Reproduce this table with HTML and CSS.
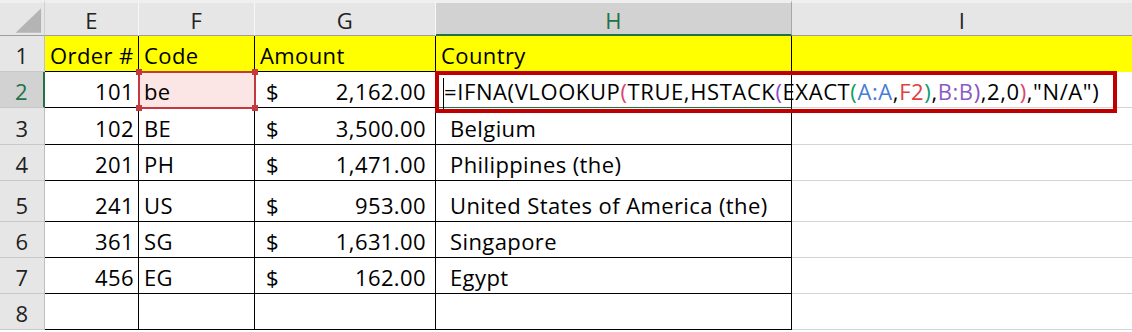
FILE: index.html
```html
<!DOCTYPE html>
<html>
<head>
<meta charset="utf-8">
<link rel="stylesheet" href="styles.css">
</head>
<body>
<div class="sheet">
  <div class="corner"><svg width="45" height="33" viewBox="0 0 45 33"><polygon points="16,30 42,30 42,5" fill="#b4b4b4"/></svg></div>
  <div class="ch">E</div>
  <div class="ch">F</div>
  <div class="ch">G</div>
  <div class="ch ch-sel">H</div>
  <div class="ch ch-last">I</div>

  <div class="rh">1</div>
  <div class="c y">Order #</div>
  <div class="c y">Code</div>
  <div class="c y">Amount</div>
  <div class="c y">Country</div>
  <div class="c y ci">&nbsp;</div>

  <div class="rh rh-sel">2</div>
  <div class="c num">101</div>
  <div class="c ref-cell">be</div>
  <div class="c amt"><span>$</span><span>2,162.00</span></div>
  <div class="c active"></div>
  <div class="c ci"></div>

  <div class="rh">3</div>
  <div class="c num">102</div>
  <div class="c">BE</div>
  <div class="c amt"><span>$</span><span>3,500.00</span></div>
  <div class="c ind">Belgium</div>
  <div class="c ci"></div>

  <div class="rh">4</div>
  <div class="c num">201</div>
  <div class="c">PH</div>
  <div class="c amt"><span>$</span><span>1,471.00</span></div>
  <div class="c ind">Philippines (the)</div>
  <div class="c ci"></div>

  <div class="rh">5</div>
  <div class="c num">241</div>
  <div class="c">US</div>
  <div class="c amt"><span>$</span><span>953.00</span></div>
  <div class="c ind">United States of America (the)</div>
  <div class="c ci"></div>

  <div class="rh">6</div>
  <div class="c num">361</div>
  <div class="c">SG</div>
  <div class="c amt"><span>$</span><span>1,631.00</span></div>
  <div class="c ind">Singapore</div>
  <div class="c ci"></div>

  <div class="rh">7</div>
  <div class="c num">456</div>
  <div class="c">EG</div>
  <div class="c amt"><span>$</span><span>162.00</span></div>
  <div class="c ind">Egypt</div>
  <div class="c ci"></div>

  <div class="rh">8</div>
  <div class="c"></div>
  <div class="c"></div>
  <div class="c"></div>
  <div class="c"></div>
  <div class="c ci"></div>

  <div class="ref-box">
    <i class="h tl"></i><i class="h tr"></i><i class="h bl"></i><i class="h br"></i>
  </div>
  <div class="editor"><span class="caret"></span><span class="f">=IFNA(VLOOKUP<b class="p1">(</b>TRUE,HSTACK<b class="p2">(</b>EXACT<b class="p3">(</b><b class="rb">A:A</b>,<b class="rr">F2</b><b class="p3">)</b>,<b class="rp">B:B</b><b class="p2">)</b>,2,0<b class="p1">)</b>,"N/A")</span></div>
</div>
</body>
</html>
```
FILE: styles.css
```css
* { box-sizing: border-box; }
html, body { margin: 0; padding: 0; background: #fff; }
body {
  font-family: "Open Sans", Lato, "Liberation Sans", sans-serif;
  font-size: 22px;
  letter-spacing: 0.4px;
  color: #000;
  overflow: hidden;
}
.sheet {
  position: relative;
  display: grid;
  grid-template-columns: 45px 94px 116px 181px 356px 340px;
  grid-template-rows: 36px 36px 36px 37px 36px 41px 36px 36px 36px;
}
.corner {
  background: #e6e6e6;
  border-top: 3px solid #efefef;
  border-right: 1px solid #d0d0d0;
  border-bottom: 1px solid #9e9e9e;
  display: flex;
}
.ch {
  background: #e6e6e6;
  border-top: 3px solid #efefef;
  border-right: 1px solid #f7f7f7;
  border-bottom: 1px solid #9e9e9e;
  display: flex;
  align-items: center;
  justify-content: center;
  color: #222;
  line-height: 1;
  padding-top: 2px;
}
.ch-sel {
  background: #d2d2d2;
  color: #217346;
  border-bottom: 2px solid #217346;
  border-right: 1px solid #a6a6a6;
}
.ch-last { border-right: none; }
.rh {
  background: #e6e6e6;
  border-right: 1px solid #bfbfbf;
  border-bottom: 1px solid #c8c8c8;
  display: flex;
  align-items: flex-end;
  justify-content: center;
  line-height: 30px;
  padding-bottom: 1px;
  color: #222;
}
.rh-sel {
  background: #d2d2d2;
  color: #217346;
  border-right: 2px solid #217346;
}
.c {
  border-right: 1px solid #000;
  border-bottom: 1px solid #000;
  display: flex;
  align-items: flex-end;
  line-height: 30px;
  padding: 0 5px 1px;
  white-space: nowrap;
}
.y { background: #ffff00; }
.y:first-of-type { letter-spacing: 0.2px; }
.ci { border-right: none; border-bottom-color: #d4d4d4; }
.y.ci { border-bottom-color: #ffff00; }
.num { justify-content: flex-end; padding-right: 4px; }
.amt { justify-content: space-between; padding: 0 9px 1px 11px; }
.ind { padding-left: 14px; }
.ref-cell { background: #fbe5e5; }
.active { border-bottom: 1px solid #217346; }
.ref-box {
  position: absolute;
  left: 138px;
  top: 71px;
  width: 118px;
  height: 38px;
  border: 2px solid #c4393f;
}
.h {
  position: absolute;
  width: 6px;
  height: 6px;
  background: #c4393f;
}
.tl { left: -4px; top: -4px; }
.tr { right: -4px; top: -4px; }
.bl { left: -4px; bottom: -4px; }
.br { right: -4px; bottom: -4px; }
.editor {
  position: absolute;
  left: 435px;
  top: 71px;
  width: 682px;
  height: 42px;
  border: 4px solid #c00000;
  display: flex;
  align-items: flex-start;
  padding: 1px 0 0 4px;
  line-height: 30px;
  white-space: nowrap;
  letter-spacing: 0.6px;
}
.caret {
  width: 1px;
  height: 31px;
  background: #000;
  margin-top: 2px;
}
.f b { font-weight: normal; }
.p1 { color: #d8456e; }
.p2 { color: #8a4fc6; }
.p3 { color: #149c6c; }
.rb { color: #4a7bd6; }
.rr { color: #e0413f; }
.rp { color: #8a5ac8; }
```
